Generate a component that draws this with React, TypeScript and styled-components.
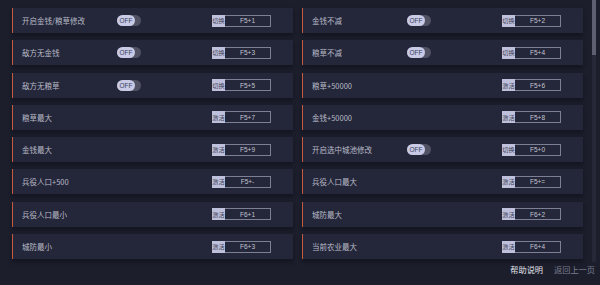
import React from "react";
import styled, {createGlobalStyle} from "styled-components";

const GlobalStyle = createGlobalStyle`
  html, body {
    margin: 0;
    padding: 0;
    background: #1c1e2c;
    font-family: "Noto Sans CJK SC", "Noto Sans", sans-serif;
  }
`;

const Page = styled.div`
  position: relative;
  width: 600px;
  height: 285px;
  overflow: hidden;
  background: #1c1e2c;
`;

const Grid = styled.div`
  display: grid;
  grid-template-columns: 281px 281px;
  column-gap: 9px;
  row-gap: 7.3px;
  padding: 8px 0 0 12px;
`;

const Row = styled.div`
  display: flex;
  align-items: center;
  height: 25px;
  background: #24273a;
  border-left: 1.5px solid #c55a3c;
  box-shadow: 0 3px 4px rgba(10, 11, 18, 0.45);
`;

const Name = styled.div`
  width: 95px;
  padding-left: 9px;
  font-size: 7.5px;
  color: #b9bac7;
  white-space: nowrap;
`;

const ToggleSlot = styled.div`
  width: 95px;
  display: flex;
  align-items: center;
`;

const Toggle = styled.div`
  position: relative;
  width: 24px;
  height: 11px;
  border-radius: 6px;
  background: #505264;
`;

const Knob = styled.div`
  position: absolute;
  left: 0;
  top: 0;
  width: 18px;
  height: 11px;
  border-radius: 6px;
  background: #c8cae6;
  color: #3b3e5c;
  font-size: 6.5px;
  font-family: "Liberation Sans", sans-serif;
  display: flex;
  align-items: center;
  justify-content: center;
`;

const KeyGroup = styled.div`
  display: flex;
  height: 12px;
  margin-left: auto;
  margin-right: 22px;
`;

const KeyLabel = styled.div`
  width: 13px;
  background: #bfc1dc;
  color: #3e4158;
  font-size: 6.2px;
  display: flex;
  align-items: center;
  justify-content: center;
`;

const KeyBox = styled.div`
  width: 46px;
  box-sizing: border-box;
  border: 1px solid #7d7f94;
  border-left: none;
  color: #c3c4d0;
  font-size: 6.5px;
  font-family: "Liberation Sans", sans-serif;
  display: flex;
  align-items: center;
  justify-content: center;
`;

const Scrollbar = styled.div`
  position: absolute;
  right: 4px;
  top: 0;
  width: 4px;
  height: 262px;
  background: #262838;
`;

const Thumb = styled.div`
  width: 4px;
  height: 55px;
  background: #5e6072;
`;

const Footer = styled.div`
  display: flex;
  justify-content: flex-end;
  gap: 11px;
  padding: 4px 5px 0 0;
`;

const Link = styled.span<{ $dim?: boolean }>`
  font-size: 8.2px;
  color: ${(p) => (p.$dim ? "#7b7d90" : "#e2e3ea")};
`;

type Item = { name: string; toggle: boolean; key: string };

const items: Item[] = [
  {name: "开启金钱/粮草修改", toggle: true, key: "F5+1"},
  {name: "金钱不减", toggle: true, key: "F5+2"},
  {name: "敌方无金钱", toggle: true, key: "F5+3"},
  {name: "粮草不减", toggle: true, key: "F5+4"},
  {name: "敌方无粮草", toggle: true, key: "F5+5"},
  {name: "粮草+50000", toggle: false, key: "F5+6"},
  {name: "粮草最大", toggle: false, key: "F5+7"},
  {name: "金钱+50000", toggle: false, key: "F5+8"},
  {name: "金钱最大", toggle: false, key: "F5+9"},
  {name: "开启选中城池修改", toggle: true, key: "F5+0"},
  {name: "兵役人口+500", toggle: false, key: "F5+-"},
  {name: "兵役人口最大", toggle: false, key: "F5+="},
  {name: "兵役人口最小", toggle: false, key: "F6+1"},
  {name: "城防最大", toggle: false, key: "F6+2"},
  {name: "城防最小", toggle: false, key: "F6+3"},
  {name: "当前农业最大", toggle: false, key: "F6+4"},
];

export default function App() {
  return (
    <Page>
      <GlobalStyle />
      <Grid>
        {items.map((it) => (
          <Row key={it.key}>
            <Name>{it.name}</Name>
            <ToggleSlot>
              {it.toggle && (
                <Toggle>
                  <Knob>OFF</Knob>
                </Toggle>
              )}
            </ToggleSlot>
            <KeyGroup>
              <KeyLabel>{it.toggle ? "切换" : "激活"}</KeyLabel>
              <KeyBox>{it.key}</KeyBox>
            </KeyGroup>
          </Row>
        ))}
      </Grid>
      <Footer>
        <Link>帮助说明</Link>
        <Link $dim>返回上一页</Link>
      </Footer>
      <Scrollbar>
        <Thumb />
      </Scrollbar>
    </Page>
  );
}
